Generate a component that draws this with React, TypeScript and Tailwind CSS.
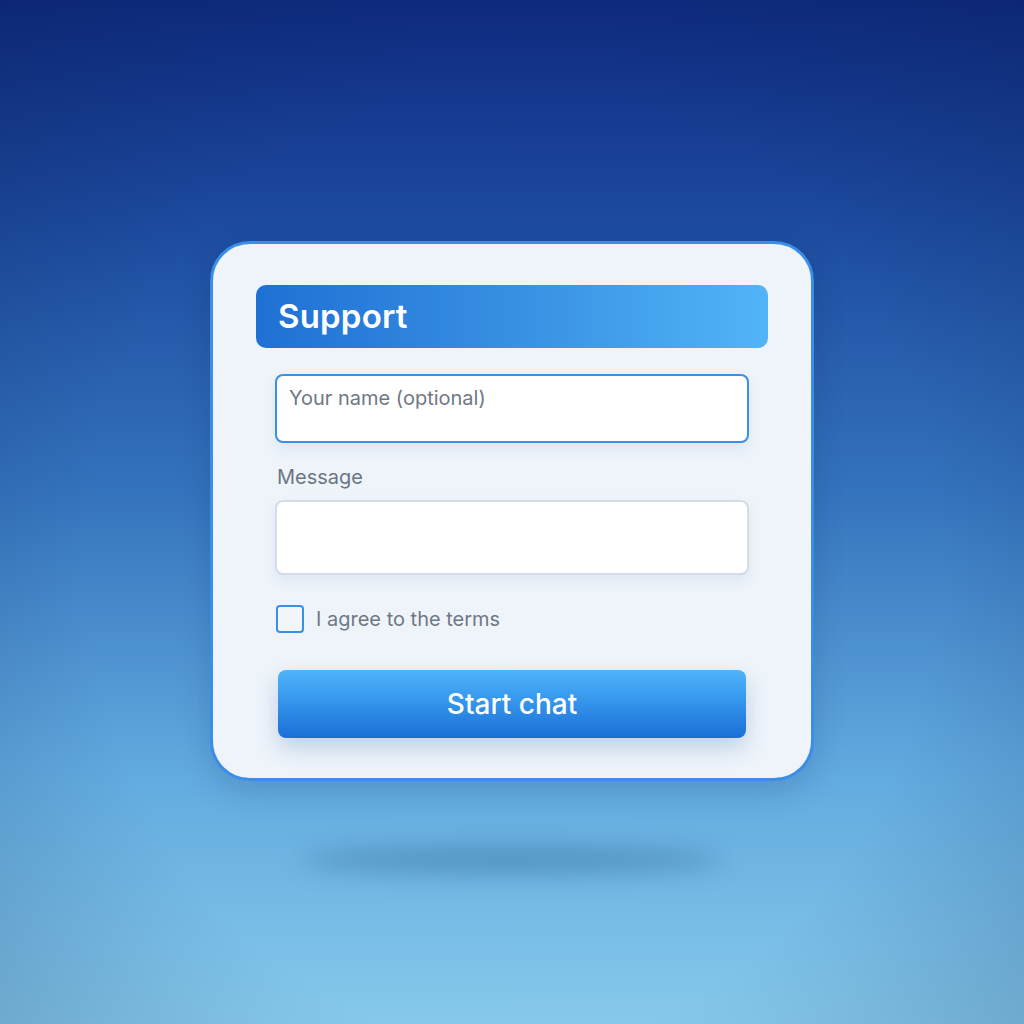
import React from "react";

const App: React.FC = () => {
  return (
    <div
      className="relative w-[1024px] h-[1024px] overflow-hidden flex flex-col items-center pt-[241px]"
      style={{ fontFamily: "Inter, 'Noto Sans', sans-serif" }}
    >
      {/* background */}
      <div className="absolute inset-0 bg-[linear-gradient(180deg,#0e2a80_0%,#1d4b9f_22%,#3473bd_48%,#62abdf_76%,#86c9eb_100%)]" />
      <div className="absolute inset-0 bg-[radial-gradient(ellipse_75%_85%_at_50%_55%,rgba(0,0,0,0)_55%,rgba(8,30,80,0.28)_100%)]" />

      {/* card */}
      <div className="relative w-[604px] h-[540px] rounded-[40px] border-[3px] border-[#3a8ee6] bg-[#eef4fa] px-[43px] pt-[41px] shadow-[0_10px_30px_rgba(10,40,100,0.18)]">
        <div className="h-[63px] rounded-[10px] bg-[linear-gradient(90deg,#1f70d4_0%,#3a93e4_55%,#52b4f8_100%)] flex items-center pl-[22px]">
          <span className="text-white text-[33px] font-semibold tracking-[0.2px]">Support</span>
        </div>

        <div className="px-[19px] pt-[26px] flex flex-col">
          <textarea
            className="h-[69px] w-full resize-none rounded-[8px] border-2 border-[#3a8fe6] bg-white px-[12px] pt-[10px] text-[20px] leading-[24px] text-[#374151] placeholder:text-[#6f7885] outline-none shadow-[0_6px_14px_rgba(30,70,130,0.08)]"
            placeholder="Your name (optional)"
          />

          <label className="mt-[22px] pl-[2px] text-[20px] leading-[24px] text-[#6b7684]">Message</label>
          <textarea className="mt-[11px] h-[75px] w-full resize-none rounded-[8px] border-2 border-[#d3dce8] bg-white outline-none shadow-[0_6px_14px_rgba(30,70,130,0.08)]" />

          <div className="mt-[30px] flex items-center gap-[12px] pl-[1px]">
            <div className="w-[28px] h-[28px] rounded-[4px] border-2 border-[#3a8fe6] bg-[#f2f6fb]" />
            <span className="text-[20px] leading-[24px] text-[#6f7885]">I agree to the terms</span>
          </div>

          <button className="mt-[37px] mx-[3px] h-[68px] rounded-[8px] bg-[linear-gradient(180deg,#50b4fb_0%,#3596ec_45%,#1a6fd6_100%)] text-white text-[28px] font-medium shadow-[0_10px_22px_rgba(30,80,150,0.22)]">
            Start chat
          </button>
        </div>
      </div>

      {/* floor shadow */}
      <div className="relative mt-[66px] w-[420px] h-[26px] rounded-[50%] bg-[rgba(30,80,130,0.35)] blur-[12px]" />
    </div>
  );
};

export default App;
